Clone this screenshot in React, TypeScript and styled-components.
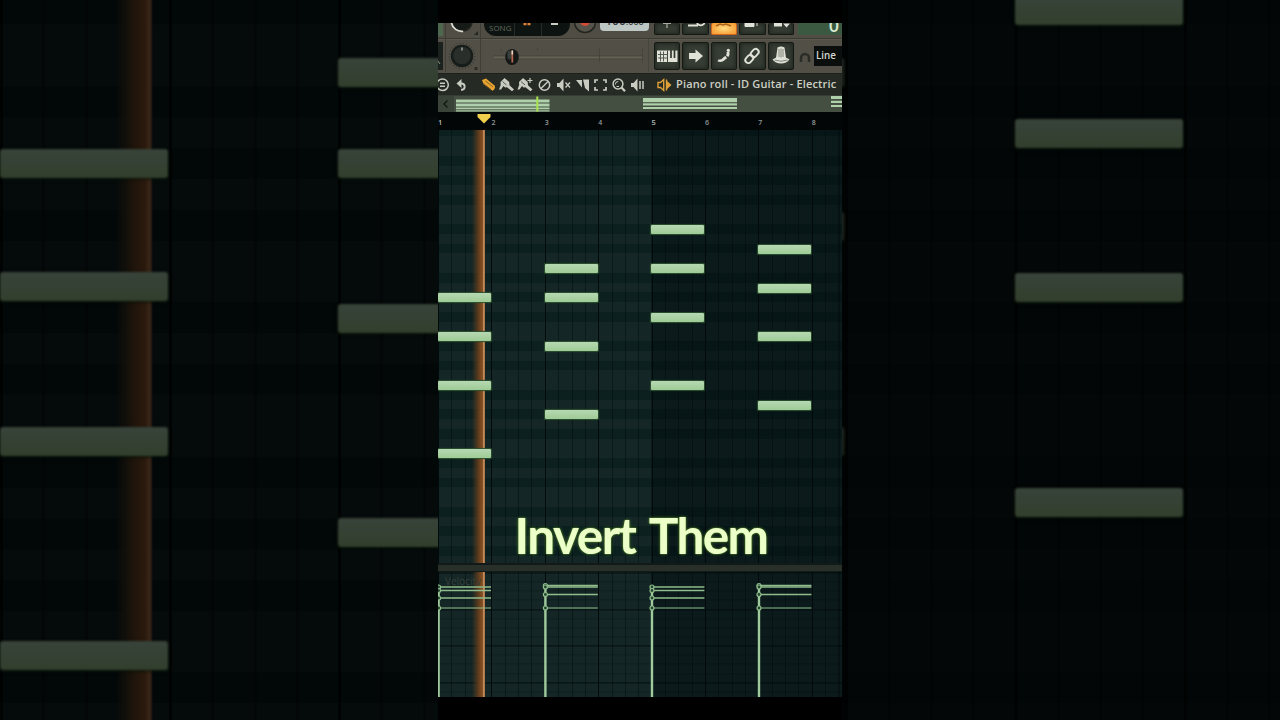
import React from "react";
import styled, { createGlobalStyle, css } from "styled-components";

const GlobalStyle = createGlobalStyle`
  html, body { margin: 0; background: #000; overflow: hidden; }
  * { box-sizing: border-box; }
  svg { display: block; flex: none; }
`;

/* Twelve rows of one octave, starting on A#; true marks a black key. */
const OCTAVE = [true, false, true, false, true, false, false, true, false, true, false, false];

const rows = (h: number, light: string, dark: string) =>
  `repeating-linear-gradient(to bottom, ${OCTAVE.map(
    (black, i) => `${black ? dark : light} ${(i * h).toFixed(2)}px ${((i + 1) * h).toFixed(2)}px`
  ).join(", ")})`;

const Stage = styled.main`
  position: relative;
  display: flex;
  justify-content: center;
  width: 1280px;
  height: 720px;
  overflow: hidden;
  background: #020606;
  font-family: "Open Sans", "Noto Sans", sans-serif;
`;

const Backdrop = styled.div`
  position: absolute;
  inset: 0;
  overflow: hidden;
  background: ${rows(30.86, "#050b0b", "#020808")} 0 -284px / 100% 370.32px;
  &::before {
    content: "";
    position: absolute;
    inset: 0;
    background:
      linear-gradient(to right, transparent 676px, rgba(0, 3, 3, 0.45) 676px),
      repeating-linear-gradient(to right, rgba(0, 0, 0, 0.5) 0 3px, transparent 3px 169.1px),
      repeating-linear-gradient(to right, rgba(0, 0, 0, 0.35) 0 3px, transparent 3px 42.27px);
  }
`;

const BackdropPlayhead = styled.div`
  position: absolute;
  left: 116px;
  top: 0;
  width: 37px;
  height: 720px;
  background: linear-gradient(to right, rgba(30, 20, 10, 0), #110f0a 25%, #20150b 50%, #2b190d 78%, #362416 88%, #332215 93%, transparent);
`;

const BackdropNote = styled.i<{ $x: number; $y: number }>`
  position: absolute;
  left: ${(p) => p.$x}px;
  top: ${(p) => p.$y}px;
  width: 168px;
  height: 29px;
  border-radius: 3px;
  background: linear-gradient(#38433a, #323f2d);
  box-shadow: 0 1px 3px #041204;
  filter: blur(0.8px);
`;

const Phone = styled.section`
  position: relative;
  display: flex;
  flex-direction: column;
  width: 404px;
  height: 720px;
  padding: 23px 0;
  background: #000;
  box-shadow: 3px 0 2px rgba(0, 0, 0, 0.45);
`;

const TransportRow = styled.div`
  display: flex;
  align-items: flex-start;
  height: 15px;
  overflow: hidden;
  background: #504d45;
`;

const ControlRow = styled.div`
  display: flex;
  align-items: center;
  height: 35px;
  padding-bottom: 1px;
  background: #524f46;
  border-top: 1px solid #3c3b33;
  box-shadow: inset 0 1px #5b584e;
`;

const ButtonGroup = styled.div`
  display: flex;
  gap: 2px;
  margin-left: 5px;
`;

const ToolButton = styled.div<{ $active?: boolean; $cut?: boolean }>`
  display: flex;
  align-items: center;
  justify-content: center;
  width: 26.4px;
  height: 28px;
  border: 1px solid #151914;
  border-radius: 2px;
  background: #363d34;
  box-shadow: inset 0 0 4px 1px #20271f;
  color: #e0e2d8;
  ${(p) => p.$cut && css`height: 12px; border-top: 0; align-items: flex-start;`}
  ${(p) => p.$active && css`
    background: radial-gradient(#ffdc84, #f8a33a 75%);
    border-color: #d4651c;
    box-shadow: none;
    color: #a8641c;
  `}
`;

const Tempo = styled.div`
  width: 49px;
  height: 8px;
  margin-left: 4px;
  overflow: hidden;
  border-radius: 0 0 4px 4px;
  background: #bdc7c3;
  color: #30383a;
  font: 600 12px/12px "Open Sans", sans-serif;
  text-align: center;
  white-space: nowrap;
  span { display: block; margin-top: -8px; }
  small { font-size: 9px; }
`;

const Counter = styled.div`
  flex: 1;
  height: 12px;
  margin-left: 4px;
  padding-right: 3px;
  overflow: hidden;
  background: #3a5940;
  color: #d9e9d2;
  font: 600 18px/18px "Open Sans", sans-serif;
  text-align: right;
  span { display: block; margin-top: -7px; }
`;

const SnapBox = styled.div`
  width: 28px;
  height: 20px;
  margin-left: auto;
  padding-left: 2px;
  background: #0a0e0d;
  color: #d5d9d0;
  font: 600 9.8px/19px "Open Sans", sans-serif;
  overflow: hidden;
`;

const TitleBar = styled.div`
  display: flex;
  align-items: center;
  height: 22px;
  overflow: hidden;
  background: #252b24;
  border-top: 1px solid #1b201b;
`;

const Title = styled.h1`
  margin: -2px 0 0 4px;
  color: #cdcfc4;
  font: 600 11px/20px "Open Sans", sans-serif;
  letter-spacing: 0.15px;
  white-space: nowrap;
`;

const Ruler = styled.div`
  display: flex;
  height: 18px;
  padding-top: 6px;
  overflow: hidden;
  background: #020607;
`;

const BarNumber = styled.span<{ $strong?: boolean }>`
  flex: 0 0 53.4px;
  color: ${(p) => (p.$strong ? "#b4bcb8" : "#8f9997")};
  font: 600 ${(p) => (p.$strong ? 7.5 : 7)}px/9px "Open Sans", sans-serif;
`;

const Roll = styled.div`
  position: relative;
  height: 433px;
  overflow: hidden;
  background: ${rows(9.75, "#142726", "#0b201f")} 0 -91px / 100% 117px;
`;

const GridLines = styled.div`
  position: absolute;
  inset: 0;
  background:
    linear-gradient(to right, transparent 213px, rgba(0, 9, 13, 0.44) 213px),
    repeating-linear-gradient(to right, rgba(0, 6, 7, 0.8) 0 1px, transparent 1px 53.4px),
    repeating-linear-gradient(to right, rgba(0, 8, 9, 0.45) 0 1px, transparent 1px 13.35px);
`;

const Playhead = styled.div`
  position: absolute;
  left: 34px;
  top: 0;
  bottom: 0;
  width: 13px;
  background: linear-gradient(to right, rgba(70, 50, 28, 0), rgba(98, 60, 30, 0.75) 40%, #7e4b20 72%, #85522b 84%, #c08a5a 88%, #a87244);
`;

const Note = styled.i<{ $x: number; $y: number }>`
  position: absolute;
  left: ${(p) => p.$x}px;
  top: ${(p) => p.$y}px;
  width: 53px;
  height: 9px;
  border-radius: 1px;
  background: linear-gradient(#b6d8b3, #9fcb95);
  box-shadow: 0 0 1px 0.5px #2d5230;
`;

const Splitter = styled.div`
  height: 9px;
  background: #293029;
  border-top: 2px solid #111a18;
  border-bottom: 1px solid #111a18;
`;

const VelocityLane = styled.div`
  position: relative;
  height: 125px;
  overflow: hidden;
  background:
    repeating-linear-gradient(to bottom, rgba(0, 7, 8, 0.65) 0 1px, transparent 1px 36.6px) 0 0.4px,
    repeating-linear-gradient(to bottom, rgba(0, 8, 9, 0.3) 0 1px, transparent 1px 9.15px) 0 0.4px,
    #142726;
`;

const LaneLabel = styled.span`
  position: absolute;
  left: 7px;
  top: 2px;
  color: #37403a;
  font: 400 10px/14px "Open Sans", sans-serif;
`;

const LaneChart = styled.svg`
  position: absolute;
  inset: 0;
`;

const Marker = styled.svg`
  position: absolute;
  left: 39px;
  top: 113px;
`;

const Caption = styled.p`
  position: absolute;
  left: 0;
  top: 505px;
  width: 404px;
  margin: 0;
  padding-left: 2px;
  color: #ecffc9;
  font: 700 49.5px/60px Lato, sans-serif;
  letter-spacing: -1.6px;
  word-spacing: 4.5px;
  text-align: center;
  white-space: nowrap;
  text-shadow: 0 0 2px rgba(120, 180, 50, 0.95), 0 0 4px rgba(90, 140, 40, 0.35);
`;

const CHORDS = [
  { x: 0, ys: [297.5, 336.5, 385.5, 453.5] },
  { x: 106.8, ys: [268.5, 297.5, 346.5, 414.5] },
  { x: 213.4, ys: [229.5, 268.5, 317.5, 385.5] },
  { x: 320.4, ys: [248.8, 287.7, 336.6, 404.8] },
];
const ZOOM = 3.168;
const ZOOM_Y = 3.152;
const VELOCITY = [
  [15, 18.5, 26, 36],
  [13.5, 15, 22.5, 36],
  [15, 18.5, 26, 36],
  [13.5, 15, 22.5, 36],
];

const TransportArt = () => (
  <svg width="158" height="15" viewBox="438 23 158 15">
    <rect x="438" y="23" width="5" height="13" fill="#4d684e" />
    <path d="M445.5 23v15M480.5 23v15" stroke="#403f37" />
    <circle cx="462" cy="21" r="10" fill="#171b18" />
    <path d="M451.5 23a10.5 10.5 0 0 0 11.5 8.3" fill="none" stroke="#dadccf" strokeWidth="1.8" />
    <path d="M464 31a10 10 0 0 0 8-8" fill="none" stroke="#242720" strokeWidth="1.4" />
    <path d="M478 31v4h-4z" fill="#22251f" />
    <path d="M484 23h86v1a12 12 0 0 1-12 12h-62a12 12 0 0 1-12-12z" fill="#0d1310" />
    <path d="M514.5 23v13M541.5 23v13" stroke="#252b26" />
    <text x="489" y="31" fontSize="8" fontFamily="Open Sans" fill="#626a5e">SONG</text>
    <path d="M523.5 23h3v2.2h-3zM527.5 23h3v2.2h-3z" fill="#df8138" />
    <path d="M551 23h7v2h-7z" fill="#c9cdc1" />
    <circle cx="585" cy="22" r="10.5" fill="#55534a" stroke="#23251f" strokeWidth="1.6" />
    <circle cx="585" cy="21" r="5" fill="#d44c38" />
  </svg>
);

const MixArt = () => (
  <svg width="211" height="33" viewBox="438 39 211 33">
    <path d="M445.5 39v33M480.5 39v33" stroke="#403f37" />
    <path d="M648.5 39v33" stroke="#47453c" />
    <rect x="438" y="42" width="5" height="28" fill="#1b211c" />
    <path d="M438 61l2 3" stroke="#8e9286" />
    <circle cx="462" cy="56" r="12.8" fill="none" stroke="#35372f" strokeWidth="1.2" strokeDasharray="1 2.2" />
    <circle cx="462" cy="56" r="11.2" fill="#161c19" />
    <circle cx="462" cy="55.5" r="8.8" fill="#292e2a" />
    <path d="M462 47.5v3" stroke="#b0b6ac" strokeWidth="1.3" />
    <path d="M474.5 67h3v3h-3z" fill="#2c2e27" />
    <path d="M494 56h148" stroke="#454339" />
    <path d="M494 57.5h148" stroke="#656155" strokeWidth="2" />
    <path d="M494 59h148" stroke="#48463c" strokeWidth=".8" />
    <path d="M501 49v3M537.5 48v3M599.5 48v14M642.5 48v14" stroke="#47453b" />
    <ellipse cx="512" cy="57" rx="6.8" ry="8" fill="#141816" />
    <ellipse cx="509.5" cy="55" rx="2.2" ry="4.5" fill="#39403b" />
    <path d="M512.3 50.5v12" stroke="#b66852" strokeWidth="1.8" />
    <path d="M512.3 50.5v4" stroke="#e8d5c8" strokeWidth="1.5" />
  </svg>
);

const cutIcons = [
  <path key="a" d="M12 0v5M8 .5h8" stroke="currentColor" strokeWidth="1.2" opacity=".7" />,
  <path key="b" d="M4 2.5h10M13 0a4 3.5 0 0 0 7.5 0" fill="none" stroke="currentColor" strokeWidth="1.8" />,
  <path key="c" d="M4 3l4-2 3 1 3-1 5 2" fill="none" stroke="currentColor" strokeWidth="1.6" />,
  <path key="d" d="M5 0h9v3.500H5zM17 0v3" fill="currentColor" stroke="currentColor" />,
  <path key="e" d="M5 0h8v3.500H5zM14 .5h7l-3.500 4z" fill="currentColor" />,
];

const panelIcons = [
  <g key="piano">
    <path d="M2 8.500h20.500v11.500H2z" fill="currentColor" />
    <path d="M5.500 9.500v10M8.500 9.500v10M3 12.500h9M3 16h9" stroke="#4a5047" strokeWidth=".9" />
    <path d="M12.500 8.500v11.500" stroke="#30372e" strokeWidth=".9" />
    <path d="M16 8v8M19.500 8v8" stroke="#30372e" strokeWidth="1.7" />
  </g>,
  <path key="arrow" d="M5 11h6.500V7.500l7.500 6.500-7.500 6.500V17H5z" fill="currentColor" />,
  <g key="swing" fill="currentColor">
    <path d="M5.500 19.500l1-2q3 .3 4-1.300 1.200-2 3.300-2.200l1.200 2.500q-1.500.3-2.700 2-2.300 2.200-6.800 1z" />
    <path d="M14 13.500q1-1.500.6-3.500l2.800-.5q.6 3.500-1 5.500z" />
    <circle cx="16.300" cy="8.300" r="1.600" />
  </g>,
  <g key="link" transform="rotate(-48 12 14)" fill="none" stroke="currentColor" strokeWidth="1.9">
    <rect x="3.5" y="11" width="9" height="6" rx="3" />
    <rect x="11.5" y="11" width="9" height="6" rx="3" />
  </g>,
  <g key="knob" fill="currentColor">
    <path d="M8.500 5.500q3.500-2 7 0L17 16H7z" />
    <path d="M3.500 17.500q3-2 5-2.500h7q3 1 5 2.500-3 4-8.500 4t-8.500-4z" />
    <path d="M5.500 18q6.500 2.600 13 0M10 7v8M12 6.500v9M14 7v8" fill="none" stroke="#555c50" strokeWidth=".7" />
  </g>,
];

const Brush = ({ x }: { x: number }) => (
  <g transform={`translate(${x} 78)`} fill="#c8cbc0" stroke="none">
    <path d="M1.500 4L5.500 0l4.700 4 .3 3.200 4.500 4.300-2 1.800-5-4-2 .2-1.500-1.500-2.500 3.500H0l1.700-4.500z" />
    <path d="M3.500 3.500l4 3.500" stroke="#252b24" strokeWidth=".7" />
  </g>
);

const Tools = () => (
  <svg width="234" height="20" viewBox="438 75 234 20" fill="none" stroke="#c8cbc0" strokeWidth="1.5">
    <circle cx="442.5" cy="84.8" r="5.800" />
    <path d="M440 83.300h5M440 86.300h5" />
    <path d="M459 83.500h3a3.200 3.200 0 0 1 0 6.300h-1" strokeWidth="1.9" />
    <path d="M461.500 79v9l-5-4.500z" fill="#c8cbc0" stroke="none" />
    <path d="M482 80l4-1.600 8.800 7.400q1 3-2.300 5l-8.800-6.500z" fill="#e8a432" stroke="none" />
    <path d="M485.500 81l7.500 6M483.500 83.500l7.500 6" stroke="#6d501b" strokeWidth=".8" />
    <Brush x={499} />
    <Brush x={517.5} />
    <path d="M530 78v5M527.500 80.500h5" strokeWidth="1.2" />
    <circle cx="544.5" cy="85" r="5.2" />
    <path d="M541 88.500l7-7" />
    <path d="M557 83h2.500l4-4.500v13l-4-4.500H557z" fill="#c8cbc0" stroke="none" />
    <path d="M565.500 82.500l4.500 5M570 82.500l-4.500 5" strokeWidth="1.3" />
    <path d="M576 80h6v7.500zM583 79.500h6v12l-4-3.500z" fill="#c8cbc0" stroke="none" />
    <path d="M595 83v-3h3M603 80h3v3M606 87v3h-3M598 90h-3v-3" strokeWidth="1.7" />
    <circle cx="618" cy="84" r="4.900" />
    <path d="M615.300 84.500q0-3 3-3M616.500 86.500h2.500" strokeWidth="1" />
    <path d="M621.500 87.500l3.500 3.800" strokeWidth="2.3" />
    <path d="M631 83h2.500l4-4.500v13l-4-4.500H631z" fill="#c8cbc0" stroke="none" />
    <path d="M640 81v8M643 81v8" />
    <path d="M658 82.500h2.500l3.200-3v11l-3.200-3H658zM666.500 79.500v11" stroke="#e0a037" strokeWidth="1.4" />
    <path d="M666.500 80.500l5 4.500-5 4.500z" fill="#e0a037" stroke="none" />
  </svg>
);

const OVERVIEW: [number, number, number, number][] = [
  [456, 99.5, 93.5, 3], [456, 103.5, 93.5, 3], [456, 107.5, 93.5, 1.8], [456, 110.3, 93.5, 1.2],
  [643, 98, 94, 4.2], [643, 103.3, 94, 2.2], [643, 107, 94, 2],
  [831, 96, 11, 3], [831, 100.8, 11, 2.2], [831, 105, 11, 2],
];

const Overview = () => (
  <svg width="404" height="17" viewBox="438 95 404 17">
    <path d="M438 95h404v17H438z" fill="#444f41" />
    <path d="M438 95h16v17h-16z" fill="#3a4337" />
    <path d="M438 95.500h404" stroke="#343d32" />
    <path d="M447.500 100.500l-3.500 3.500 3.500 3.500" fill="none" stroke="#10150f" strokeWidth="1.3" />
    {OVERVIEW.map(([x, y, w, h]) => (
      <rect key={`${x}-${y}`} x={x} y={y} width={w} height={h} fill="#aed0aa" />
    ))}
    <path d="M537.300 96.500v15" stroke="#a9e34f" strokeWidth="2" />
  </svg>
);

export default function App() {
  return (
    <Stage>
      <GlobalStyle />
      <Backdrop>
        <BackdropPlayhead />
        {CHORDS.flatMap((c) =>
          c.ys.map((y) => (
            <BackdropNote key={`${c.x}-${y}`} $x={c.x * ZOOM} $y={(y - 297.5) * ZOOM_Y + 149.4} />
          ))
        )}
      </Backdrop>
      <Phone>
        <TransportRow>
          <TransportArt />
          <Tempo><span>100<small>.000</small></span></Tempo>
          <ButtonGroup>
            {cutIcons.map((icon, i) => (
              <ToolButton key={i} $cut $active={i === 2}>
                <svg width="24" height="8">{icon}</svg>
              </ToolButton>
            ))}
          </ButtonGroup>
          <Counter><span>0</span></Counter>
        </TransportRow>
        <ControlRow>
          <MixArt />
          <ButtonGroup>
            {panelIcons.map((icon, i) => (
              <ToolButton key={i}>
                <svg width="24" height="26" viewBox="0 1 24 26">{icon}</svg>
              </ToolButton>
            ))}
          </ButtonGroup>
          <svg width="20" height="20" viewBox="0 0 20 20">
            <path d="M7 16v-4a4 4 0 0 1 8 0v4" fill="none" stroke="#2a2d26" strokeWidth="2.5" />
          </svg>
          <SnapBox>Line</SnapBox>
        </ControlRow>
        <TitleBar>
          <Tools />
          <Title>Piano roll - ID Guitar - Electric</Title>
        </TitleBar>
        <Overview />
        <Ruler>
          {[1, 2, 3, 4, 5, 6, 7, 8].map((n) => (
            <BarNumber key={n} $strong={n === 1 || n === 5}>{n}</BarNumber>
          ))}
        </Ruler>
        <Roll>
          <GridLines />
          <Playhead />
          {CHORDS.flatMap((c) =>
            c.ys.map((y) => <Note key={`${c.x}-${y}`} $x={c.x} $y={y - 134.2} />)
          )}
        </Roll>
        <Splitter />
        <VelocityLane>
          <GridLines />
          <Playhead />
          <LaneLabel>Velocity</LaneLabel>
          <LaneChart width="404" height="125">
            {CHORDS.map((c, i) => (
              <g key={c.x} stroke="#8fbd8c" fill="#24452f">
                <path d={`M${c.x + 0.6} 14v111`} stroke="#9fcb9c" strokeWidth="2.4" />
                {VELOCITY[i].map((v) => (
                  <g key={v}>
                    <path d={`M${c.x} ${v}h53`} strokeWidth={v === 36 ? 1 : 1.5} />
                    <circle cx={c.x + 0.6} cy={v} r="2" strokeWidth="1.2" />
                  </g>
                ))}
              </g>
            ))}
          </LaneChart>
        </VelocityLane>
        <Marker width="14" height="11" viewBox="0 0 14 11">
          <path d="M.5 1h13v3L7 10.500.5 4z" fill="#f0cf4c" />
        </Marker>
        <Caption>Invert Them</Caption>
      </Phone>
    </Stage>
  );
}
